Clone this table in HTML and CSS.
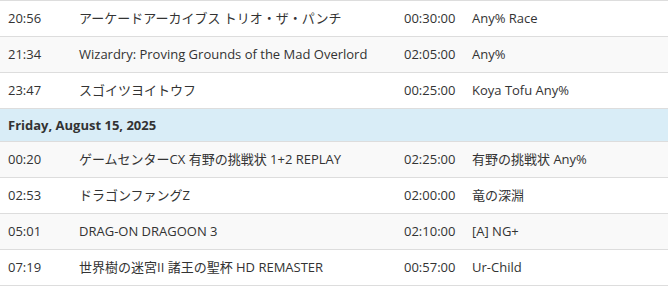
FILE: index.html
```html
<!DOCTYPE html>
<html lang="ja">
<head>
<meta charset="utf-8">
<title>Schedule</title>
<link rel="stylesheet" href="styles.css">
</head>
<body>
<table class="schedule">
  <colgroup>
    <col class="c-time">
    <col class="c-game">
    <col class="c-est">
    <col class="c-cat">
  </colgroup>
  <tbody>
    <tr class="row"><td>20:56</td><td>アーケードアーカイブス トリオ・ザ・パンチ</td><td>00:30:00</td><td>Any% Race</td></tr>
    <tr class="row alt"><td>21:34</td><td>Wizardry: Proving Grounds of the Mad Overlord</td><td>02:05:00</td><td>Any%</td></tr>
    <tr class="row"><td>23:47</td><td>スゴイツヨイトウフ</td><td>00:25:00</td><td>Koya Tofu Any%</td></tr>
    <tr class="day"><td colspan="4">Friday, August 15, 2025</td></tr>
    <tr class="row alt"><td>00:20</td><td>ゲームセンターCX 有野の挑戦状 1+2 REPLAY</td><td>02:25:00</td><td>有野の挑戦状 Any%</td></tr>
    <tr class="row"><td>02:53</td><td>ドラゴンファングZ</td><td>02:00:00</td><td>竜の深淵</td></tr>
    <tr class="row alt"><td>05:01</td><td>DRAG-ON DRAGOON 3</td><td>02:10:00</td><td>[A] NG+</td></tr>
    <tr class="row last"><td>07:19</td><td>世界樹の迷宮II 諸王の聖杯 HD REMASTER</td><td>00:57:00</td><td>Ur-Child</td></tr>
  </tbody>
</table>
</body>
</html>
```
FILE: styles.css
```css
html, body {
  margin: 0;
  padding: 0;
  background: #fff;
}
body {
  font-family: "Open Sans", "Noto Sans CJK JP", sans-serif;
  font-size: 13px;
  color: #333;
}
.schedule {
  width: 668px;
  border-collapse: collapse;
  table-layout: fixed;
}
.c-time { width: 71px; }
.c-game { width: 325px; }
.c-est { width: 68px; }
.c-cat { width: auto; }
.schedule td {
  border-top: 1px solid #ddd;
  padding: 0 8px;
  height: 35px;
  line-height: 19px;
  vertical-align: middle;
  white-space: nowrap;
  overflow: hidden;
}
.row.alt td {
  background: #f9f9f9;
}
.row.last td {
  border-bottom: 1px solid #ddd;
}
.day td {
  background: #d9edf7;
  font-weight: 700;
  height: 32px;
}
```
